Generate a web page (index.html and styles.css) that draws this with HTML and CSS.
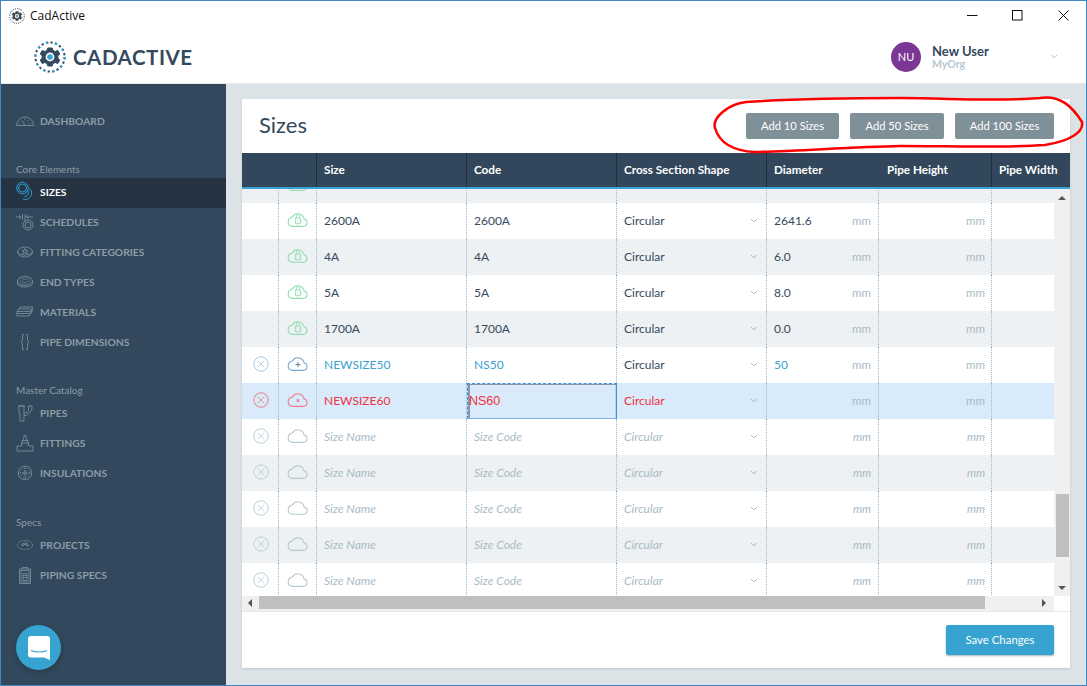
FILE: index.html
```html
<!DOCTYPE html>
<html lang="en">
<head>
<meta charset="utf-8">
<title>CadActive</title>
<link rel="stylesheet" href="styles.css">
</head>
<body>
<svg class="defs" width="0" height="0" aria-hidden="true">
  <symbol id="cloud" viewBox="0 0 20 15"><path d="M4.800 14.500h10.900a3.600 3.600 0 0 0 .6-7.100A6 6 0 0 0 5.200 5.600a4.500 4.500 0 0 0-.4 8.900z" fill="none" stroke="currentColor"/></symbol>
  <symbol id="cloud-lock" viewBox="0 0 20 15"><path d="M4.800 14.500h10.900a3.600 3.600 0 0 0 .6-7.100A6 6 0 0 0 5.200 5.600a4.500 4.500 0 0 0-.4 8.900z" fill="none" stroke="currentColor"/><rect x="8" y="6.500" width="5" height="5.500" rx=".8" fill="currentColor" fill-opacity=".15" stroke="currentColor" stroke-opacity=".8"/><path d="M9 6.500V5a1.500 1.500 0 0 1 3 0v1.500" fill="none" stroke="currentColor" stroke-opacity=".8"/></symbol>
  <symbol id="cloud-plus" viewBox="0 0 20 15"><path d="M4.800 14.500h10.900a3.600 3.600 0 0 0 .6-7.100A6 6 0 0 0 5.200 5.600a4.500 4.500 0 0 0-.4 8.900z" fill="none" stroke="currentColor"/><path d="M10.500 6.500v5M8 9h5" fill="none" stroke="#4f6f8f" stroke-width=".8"/></symbol>
  <symbol id="cloud-x" viewBox="0 0 20 15"><path d="M4.800 14.500h10.900a3.600 3.600 0 0 0 .6-7.100A6 6 0 0 0 5.200 5.600a4.500 4.500 0 0 0-.4 8.900z" fill="none" stroke="currentColor"/><path d="M9.200 7.800l2.400 2.400m0-2.400l-2.400 2.400" fill="none" stroke="currentColor"/></symbol>
  <symbol id="x-circle" viewBox="0 0 16 16"><circle cx="8" cy="8" r="7.200" fill="none" stroke="currentColor"/><path d="M4.800 4.800l6.400 6.400m0-6.400l-6.400 6.400" fill="none" stroke="currentColor" stroke-width=".8"/></symbol>
  <symbol id="chev" viewBox="0 0 8 5"><path d="M1 1l3 3 3-3" fill="none" stroke="currentColor"/></symbol>
  <symbol id="gear" viewBox="0 0 32 32">
    <circle cx="16" cy="16" r="14.600" fill="none" stroke="#34495e" stroke-width="2" stroke-dasharray="2.300 2.285"/>
    <circle cx="16" cy="16" r="14.600" fill="none" stroke="#36a3d0" stroke-width="2" stroke-dasharray="2.300 6.870"/>
    <path d="M13.800 7h4.400l.8 2.500 2.300 1 2.400-1.100 2.100 3.600-1.900 1.700v2.600l1.900 1.700-2.100 3.600-2.400-1.100-2.300 1-.8 2.500h-4.400l-.8-2.500-2.300-1-2.400 1.100-2.100-3.600 1.900-1.700v-2.600L6.200 13l2.100-3.600 2.400 1.100 2.300-1z" fill="#34495e" stroke="#34495e" stroke-linejoin="round"/>
    <circle cx="16" cy="16" r="4.400" fill="#fff"/><circle cx="16" cy="16" r="2.800" fill="#36a3d0"/>
  </symbol>
</svg>

<div class="window">
  <div class="titlebar">
    <svg class="title-icon"><use href="#gear"/></svg>
    <span class="title-text">CadActive</span>
    <div class="win-controls">
      <span class="win-btn"><svg width="11" height="11" viewBox="0 0 11 11"><path d="M0 5.500h10.500" stroke="#111" fill="none"/></svg></span>
      <span class="win-btn"><svg width="11" height="11" viewBox="0 0 11 11"><rect x=".5" y=".5" width="9.500" height="9.500" stroke="#111" fill="none"/></svg></span>
      <span class="win-btn"><svg width="11" height="11" viewBox="0 0 11 11"><path d="M.5.500l10 10m0-10l-10 10" stroke="#111" fill="none"/></svg></span>
    </div>
  </div>

  <header class="appbar">
    <svg class="logo-icon"><use href="#gear"/></svg>
    <span class="logo-text">CADACTIVE</span>
    <div class="user">
      <span class="avatar">NU</span>
      <div class="user-text">
        <div class="user-name">New User</div>
        <div class="user-org">MyOrg</div>
      </div>
      <svg class="user-chev"><use href="#chev"/></svg>
    </div>
  </header>

  <div class="app">
    <nav class="sidebar">
      <a class="nav-item first">
        <svg class="nav-icon" viewBox="0 0 18 18"><path d="M.5 13.500a8.500 8.500 0 0 1 17 0zM9 13.500l-3-5M3.500 11.500l1 .5M14.500 11.500l-1 .5M9 6.500v1.500M12.500 8l-1 1"/></svg>
        DASHBOARD</a>

      <div class="nav-label core">Core Elements</div>
      <a class="nav-item active">
        <svg class="nav-icon" viewBox="0 0 18 18"><circle cx="6.500" cy="5" r="5.800"/><circle cx="6.500" cy="5" r="4"/><path d="M13.500 5.500a6.300 6.300 0 0 1-6.500 10.500M12 8a3.800 3.800 0 0 1-3.500 5.500"/></svg>
        SIZES</a>
      <a class="nav-item">
        <svg class="nav-icon" viewBox="0 0 18 18"><path d="M0 4h5M3 2l2 2-2 2M6.500 1v6M9 1v6M10.500 4l2-2M10.500 4l2 2M10.500 4H17"/><circle cx="12" cy="12" r="5"/><circle cx="12" cy="12" r="3"/><path d="M9 7v2"/></svg>
        SCHEDULES</a>
      <a class="nav-item">
        <svg class="nav-icon" viewBox="0 0 18 18"><ellipse cx="9" cy="9" rx="7.500" ry="5"/><path d="M1.500 9a7.500 3 0 0 0 15 0M9 5.500l1 2h2l-1.500 1.300.6 1.700L9 9.500l-2.100 1 .6-1.700L6 7.500h2z"/></svg>
        FITTING CATEGORIES</a>
      <a class="nav-item">
        <svg class="nav-icon" viewBox="0 0 18 18"><ellipse cx="9" cy="8" rx="7.500" ry="4.500"/><ellipse cx="9" cy="8" rx="5" ry="2.800" stroke-dasharray="1 1"/><ellipse cx="9" cy="8" rx="3" ry="1.500" stroke-dasharray="1 1"/><path d="M1.500 8v2.500c0 2 3.400 3.500 7.500 3.500s7.500-1.500 7.500-3.500V8"/></svg>
        END TYPES</a>
      <a class="nav-item">
        <svg class="nav-icon" viewBox="0 0 18 18"><path d="M4 4h13l-3 4.500H1zM1 8.500v2h13l3-4.500M1 10.500v2.500h12l3-4.500v-2M3 6h11"/></svg>
        MATERIALS</a>
      <a class="nav-item">
        <svg class="nav-icon" viewBox="0 0 18 18"><path d="M8 1.500H6.500v6L5 9l1.500 1.500v6H8M10 1.500h1.500v6L13 9l-1.500 1.500v6H10"/></svg>
        PIPE DIMENSIONS</a>

      <div class="nav-label master">Master Catalog</div>
      <a class="nav-item">
        <svg class="nav-icon" viewBox="0 0 18 18"><path d="M3 2h5v15H4V9H3zM8 9h2l2.500-2V2h3.500v3l-2 3.500-4 3H8M2 2h7"/></svg>
        PIPES</a>
      <a class="nav-item">
        <svg class="nav-icon" viewBox="0 0 18 18"><path d="M1 12h4.500V9h7v3H17v5H1zM6 9V6.500h6V9M6.800 6.500L8 3.500V1.500h2v2l1.200 3"/></svg>
        FITTINGS</a>
      <a class="nav-item">
        <svg class="nav-icon" viewBox="0 0 18 18"><circle cx="9" cy="9" r="6.800"/><circle cx="9" cy="9" r="4.500" stroke-dasharray="1 1"/><circle cx="9" cy="9" r="1.500"/><path d="M9 2v14M2 9h14" stroke-dasharray="1 1"/></svg>
        INSULATIONS</a>

      <div class="nav-label specs">Specs</div>
      <a class="nav-item">
        <svg class="nav-icon" viewBox="0 0 18 18"><ellipse cx="9" cy="9" rx="7.500" ry="4.500" stroke-dasharray="1.500 .8"/><path d="M5.500 9.500c0-2 1.500-2.500 3.500-2.500s3.500.5 3.500 2.500h-2V8.500h-3v1z"/></svg>
        PROJECTS</a>
      <a class="nav-item">
        <svg class="nav-icon" viewBox="0 0 18 18"><path d="M3.500 3h11v14.500h-11zM6.500 3V1.500h5V3M5 4.500h8v11.500H5zM7 7.500h4v7H7zM7 9.500h4M7 11.500h4"/></svg>
        PIPING SPECS</a>

      <button class="chat" type="button" aria-label="Chat">
        <svg width="22" height="24" viewBox="0 0 22 24"><path d="M3 0h16a3 3 0 0 1 3 3v21l-6-2.500H3a3 3 0 0 1-3-3V3a3 3 0 0 1 3-3z" fill="#fff"/><path d="M3 14.500c4 2 12 2 16 0" fill="none" stroke="#36a3d0" stroke-width="1.200"/></svg>
      </button>
    </nav>

    <main class="main">
      <section class="card">
        <div class="card-head">
          <h1 class="card-title">Sizes</h1>
          <div class="actions">
            <button class="btn" type="button">Add 10 Sizes</button>
            <button class="btn" type="button">Add 50 Sizes</button>
            <button class="btn" type="button">Add 100 Sizes</button>
          </div>
        </div>

        <div class="grid-head">
          <div class="th"></div>
          <div class="th"></div>
          <div class="th">Size</div>
          <div class="th">Code</div>
          <div class="th">Cross Section Shape</div>
          <div class="th">Diameter</div>
          <div class="th">Pipe Height</div>
          <div class="th">Pipe Width</div>
        </div>

        <div class="grid-area">
          <div class="grid-body">
            <div class="rows">
              <div class="row alt partial">
                <div class="td"></div>
                <div class="td ic"><svg class="cloud green"><use href="#cloud-lock"/></svg></div>
                <div class="td"></div><div class="td"></div><div class="td"></div><div class="td"></div><div class="td"></div><div class="td"></div>
              </div>

              <div class="row">
                <div class="td"></div>
                <div class="td ic"><svg class="cloud green"><use href="#cloud-lock"/></svg></div>
                <div class="td">2600A</div><div class="td">2600A</div>
                <div class="td split">Circular<svg class="chev"><use href="#chev"/></svg></div>
                <div class="td split">2641.6<span class="unit">mm</span></div>
                <div class="td split end"><span class="unit">mm</span></div><div class="td"></div>
              </div>
              <div class="row alt">
                <div class="td"></div>
                <div class="td ic"><svg class="cloud green"><use href="#cloud-lock"/></svg></div>
                <div class="td">4A</div><div class="td">4A</div>
                <div class="td split">Circular<svg class="chev"><use href="#chev"/></svg></div>
                <div class="td split">6.0<span class="unit">mm</span></div>
                <div class="td split end"><span class="unit">mm</span></div><div class="td"></div>
              </div>
              <div class="row">
                <div class="td"></div>
                <div class="td ic"><svg class="cloud green"><use href="#cloud-lock"/></svg></div>
                <div class="td">5A</div><div class="td">5A</div>
                <div class="td split">Circular<svg class="chev"><use href="#chev"/></svg></div>
                <div class="td split">8.0<span class="unit">mm</span></div>
                <div class="td split end"><span class="unit">mm</span></div><div class="td"></div>
              </div>
              <div class="row alt">
                <div class="td"></div>
                <div class="td ic"><svg class="cloud green"><use href="#cloud-lock"/></svg></div>
                <div class="td">1700A</div><div class="td">1700A</div>
                <div class="td split">Circular<svg class="chev"><use href="#chev"/></svg></div>
                <div class="td split">0.0<span class="unit">mm</span></div>
                <div class="td split end"><span class="unit">mm</span></div><div class="td"></div>
              </div>

              <div class="row new">
                <div class="td ic"><svg class="xc"><use href="#x-circle"/></svg></div>
                <div class="td ic"><svg class="cloud"><use href="#cloud-plus"/></svg></div>
                <div class="td">NEWSIZE50</div><div class="td">NS50</div>
                <div class="td split plain">Circular<svg class="chev"><use href="#chev"/></svg></div>
                <div class="td split">50<span class="unit">mm</span></div>
                <div class="td split end"><span class="unit">mm</span></div><div class="td"></div>
              </div>

              <div class="row error">
                <div class="td ic"><svg class="xc"><use href="#x-circle"/></svg></div>
                <div class="td ic"><svg class="cloud"><use href="#cloud-x"/></svg></div>
                <div class="td">NEWSIZE60</div>
                <div class="td editing">NS60</div>
                <div class="td split">Circular<svg class="chev"><use href="#chev"/></svg></div>
                <div class="td split end"><span class="unit">mm</span></div>
                <div class="td split end"><span class="unit">mm</span></div><div class="td"></div>
              </div>

              <div class="row empty">
                <div class="td ic"><svg class="xc"><use href="#x-circle"/></svg></div>
                <div class="td ic"><svg class="cloud"><use href="#cloud"/></svg></div>
                <div class="td">Size Name</div><div class="td">Size Code</div>
                <div class="td split">Circular<svg class="chev"><use href="#chev"/></svg></div>
                <div class="td split end"><span class="unit">mm</span></div>
                <div class="td split end"><span class="unit">mm</span></div><div class="td"></div>
              </div>
              <div class="row empty alt">
                <div class="td ic"><svg class="xc"><use href="#x-circle"/></svg></div>
                <div class="td ic"><svg class="cloud"><use href="#cloud"/></svg></div>
                <div class="td">Size Name</div><div class="td">Size Code</div>
                <div class="td split">Circular<svg class="chev"><use href="#chev"/></svg></div>
                <div class="td split end"><span class="unit">mm</span></div>
                <div class="td split end"><span class="unit">mm</span></div><div class="td"></div>
              </div>
              <div class="row empty">
                <div class="td ic"><svg class="xc"><use href="#x-circle"/></svg></div>
                <div class="td ic"><svg class="cloud"><use href="#cloud"/></svg></div>
                <div class="td">Size Name</div><div class="td">Size Code</div>
                <div class="td split">Circular<svg class="chev"><use href="#chev"/></svg></div>
                <div class="td split end"><span class="unit">mm</span></div>
                <div class="td split end"><span class="unit">mm</span></div><div class="td"></div>
              </div>
              <div class="row empty alt">
                <div class="td ic"><svg class="xc"><use href="#x-circle"/></svg></div>
                <div class="td ic"><svg class="cloud"><use href="#cloud"/></svg></div>
                <div class="td">Size Name</div><div class="td">Size Code</div>
                <div class="td split">Circular<svg class="chev"><use href="#chev"/></svg></div>
                <div class="td split end"><span class="unit">mm</span></div>
                <div class="td split end"><span class="unit">mm</span></div><div class="td"></div>
              </div>
              <div class="row empty">
                <div class="td ic"><svg class="xc"><use href="#x-circle"/></svg></div>
                <div class="td ic"><svg class="cloud"><use href="#cloud"/></svg></div>
                <div class="td">Size Name</div><div class="td">Size Code</div>
                <div class="td split">Circular<svg class="chev"><use href="#chev"/></svg></div>
                <div class="td split end"><span class="unit">mm</span></div>
                <div class="td split end"><span class="unit">mm</span></div><div class="td"></div>
              </div>
            </div>

            <div class="vscroll">
              <span class="arrow up"></span>
              <span class="vtrack"><span class="vthumb"></span></span>
              <span class="arrow down"></span>
            </div>
          </div>

          <div class="hscroll">
            <span class="arrow left"></span>
            <span class="hthumb"></span>
            <span class="arrow right"></span>
          </div>
        </div>

        <div class="card-foot">
          <button class="btn-save" type="button">Save Changes</button>
        </div>
      </section>
    </main>
  </div>

  <svg class="annotation" viewBox="0 0 1087 686" aria-hidden="true">
    <path d="M746 102C790 99 850 98 900 98C950 98 990 102 1040 98C1060 95 1072 106 1082 122C1084 132 1070 141 1045 145C1000 148 950 146 900 146C850 147 800 151 755 152C735 151 720 145 715 128C712 118 728 104 746 102Z" fill="none" stroke="#f00" stroke-width="2.500"/>
  </svg>
</div>
</body>
</html>
```

FILE: styles.css
```css
* { box-sizing: border-box; }
html, body { margin: 0; padding: 0; }
body { font-family: Lato, "Open Sans", Arial, sans-serif; color: #34495e; }
.defs { position: absolute; }

.window {
  position: relative;
  width: 1087px;
  height: 686px;
  border: 1px solid #3f87c6;
  display: flex;
  flex-direction: column;
  overflow: hidden;
  background: #fff;
}

/* Title bar */
.titlebar { height: 29px; display: flex; align-items: center; padding-left: 8px; background: #fff; flex: none; }
.title-icon { width: 16px; height: 16px; filter: grayscale(.8); }
.title-text { font-family: "Open Sans", sans-serif; font-size: 12px; color: #111; margin-left: 5px; }
.win-controls { margin-left: auto; display: flex; }
.win-btn { width: 45.500px; height: 29px; display: flex; align-items: center; justify-content: center; }

/* App bar */
.appbar { height: 54px; flex: none; display: flex; align-items: center; padding-left: 33px; border-bottom: 1px solid #e6eaec; }
.logo-icon { width: 32px; height: 32px; }
.logo-text { font-weight: 700; font-size: 20.500px; letter-spacing: .55px; color: #34495e; margin-left: 7px; }
.user { margin-left: auto; display: flex; align-items: center; padding-right: 28px; }
.avatar { width: 30px; height: 30px; border-radius: 50%; background: #7b3794; color: #fff; font-size: 11px; display: flex; align-items: center; justify-content: center; }
.user-text { margin-left: 11px; width: 118px; }
.user-name { font-size: 13px; font-weight: 700; line-height: 14px; color: #34495e; }
.user-org { font-size: 10.500px; font-weight: 700; line-height: 12px; color: #b9c8d0; }
.user-chev { width: 8px; height: 5px; color: #b8c6ce; }

/* Layout */
.app { flex: 1; display: flex; min-height: 0; }

/* Sidebar */
.sidebar { position: relative; width: 225px; background: #33485c; padding-top: 23px; flex: none; }
.nav-item { display: flex; align-items: center; height: 30px; padding: 0 0 2px 15px; font-size: 10.300px; font-weight: 700; color: #8b9da7; }
.nav-item.active { background: #253342; color: #fff; }
.nav-icon { width: 18px; height: 18px; margin-right: 6px; fill: none; stroke: #7c97a4; stroke-width: .8; flex: none; overflow: visible; }
.active .nav-icon { stroke: #2f9fd6; stroke-width: 1; }
.nav-label { height: 18px; line-height: 18px; padding-left: 15px; font-size: 10px; color: #8b9da7; }
.nav-label.core { margin-top: 23px; }
.nav-label.master { margin-top: 23px; }
.nav-label.specs { margin-top: 24px; }
.chat { position: absolute; left: 15px; top: 541px; width: 45px; height: 45px; border: 0; padding: 0; border-radius: 50%; background: #36a3d0; display: flex; align-items: center; justify-content: center; box-shadow: 0 2px 6px rgba(0,0,0,.2); }

/* Main */
.main { flex: 1; background: #dce3e6; padding: 15px 16px 17px; min-width: 0; }
.card { height: 100%; background: #fff; display: flex; flex-direction: column; box-shadow: 0 1px 2px rgba(0,0,0,.12); }
.card-head { height: 54px; flex: none; display: flex; align-items: center; justify-content: space-between; padding: 0 16px 0 17px; }
.card-title { margin: 0; padding-bottom: 4px; font-size: 22px; font-weight: 400; color: #34495e; }
.actions { display: flex; gap: 11px; }
.btn { height: 26px; border: 0; border-radius: 2px; background: #7f9099; color: #fff; font-family: inherit; font-size: 11.200px; padding: 0 0 2px; }
.btn:nth-child(1) { width: 93px; }
.btn:nth-child(2) { width: 94px; }
.btn:nth-child(3) { width: 99px; }

/* Grid */
.grid-head { height: 36px; flex: none; display: grid; grid-template-columns: 37px 38px 150px 150px 150px 112px 113px 78px; background: #32475b; border-bottom: 2px solid #36a3d0; }
.th { font-size: 11.700px; font-weight: 700; color: #fff; display: flex; align-items: center; padding: 0 0 2px 7px; }
.th:nth-child(2), .th:nth-child(3), .th:nth-child(4), .th:nth-child(5), .th:nth-child(7) { border-right: 1px solid #1f2e3c; }
.th:nth-child(7) { padding-left: 8px; }

.grid-area { flex: 1; min-height: 0; display: flex; flex-direction: column; }
.grid-body { flex: 1; min-height: 0; display: flex; }
.rows { flex: 1; min-width: 0; overflow: hidden; }
.row { height: 36px; display: grid; grid-template-columns: 37px 38px 150px 150px 150px 112px 113px 62px; background: #fff; font-size: 12px; }
.row.alt { background: #edf1f3; }
.row.partial { margin-top: -22px; }
.td { display: flex; align-items: center; padding: 0 7px 2px; border-right: 1px dotted #9db8c6; min-width: 0; }
.td:last-child { border-right: 0; }
.td.ic { justify-content: center; padding: 0; }
.td:nth-child(7) { padding-right: 6px; }
.split { justify-content: space-between; }
.split.end { justify-content: flex-end; }
.unit { font-size: 11.500px; color: #a9bac4; }
.chev { width: 8px; height: 5px; color: #a9bcc6; margin-right: 1px; }
.cloud { width: 21px; height: 16px; margin-bottom: 4px; color: #b5c6cf; }
.cloud.green { color: #8edcb0; }
.xc { width: 16px; height: 16px; margin: 0 0 3px 1px; color: #b8d2d8; }

.new { color: #3b9fd0; }
.new .plain { color: #34495e; }
.new .cloud { color: #7aa7cf; }
.new .xc { color: #a9c6e2; }

.error { background: #d9eafa; color: #ef3340; }
.error .cloud, .error .xc { color: #ef7a85; }
.row .editing {
  font-family: "Liberation Sans", Arial, sans-serif;
  font-size: 12.500px;
  padding: 0 0 0 1px;
  border: 1px dashed #3f8fe0;
  border-right: 1px solid #3f8fe0;
  border-bottom: 1px solid #80b4ec;
  box-shadow: inset 2px 1px 0 #8d96a6, inset -1px 0 0 #c5cfdc;
}

.empty .td { font-style: italic; color: #a9bcc6; }

/* Scrollbars */
.vscroll { width: 16px; flex: none; background: #f0f0f0; display: flex; flex-direction: column; align-items: center; }
.vtrack { flex: 1; width: 100%; display: flex; flex-direction: column; padding: 0 1px 0 2px; }
.vthumb { display: block; margin-top: 294px; height: 63px; background: #bfbfbf; }
.hscroll { height: 15px; flex: none; margin-right: 16px; background: #f0f0f0; display: flex; align-items: flex-start; }
.hthumb { display: block; width: 726px; height: 13px; background: #bfbfbf; margin-left: 7px; }
.arrow { width: 0; height: 0; border: 4px solid transparent; flex: none; }
.arrow.up { border-bottom: 4px solid #555; border-top-width: 0; margin-top: 7px; }
.arrow.down { border-top: 4px solid #555; border-bottom-width: 0; margin-bottom: 6px; }
.arrow.left { border-right: 4px solid #555; border-left-width: 0; margin: 3px 0 0 6px; }
.arrow.right { border-left: 4px solid #555; border-right-width: 0; margin: 3px 0 0 57px; }

/* Footer */
.card-foot { height: 57px; flex: none; border-top: 1px solid #e5e9eb; display: flex; align-items: center; justify-content: flex-end; padding-right: 16px; }
.btn-save { width: 108px; height: 30px; border: 0; border-radius: 2px; background: #36a3d0; color: #fff; font-family: inherit; font-size: 11.400px; padding: 0 0 2px; box-shadow: 0 1px 2px rgba(0,0,0,.3); }

/* Hand-drawn annotation lying over the page */
.annotation { position: absolute; left: -1px; top: -1px; width: 1087px; height: 686px; pointer-events: none; }
```
